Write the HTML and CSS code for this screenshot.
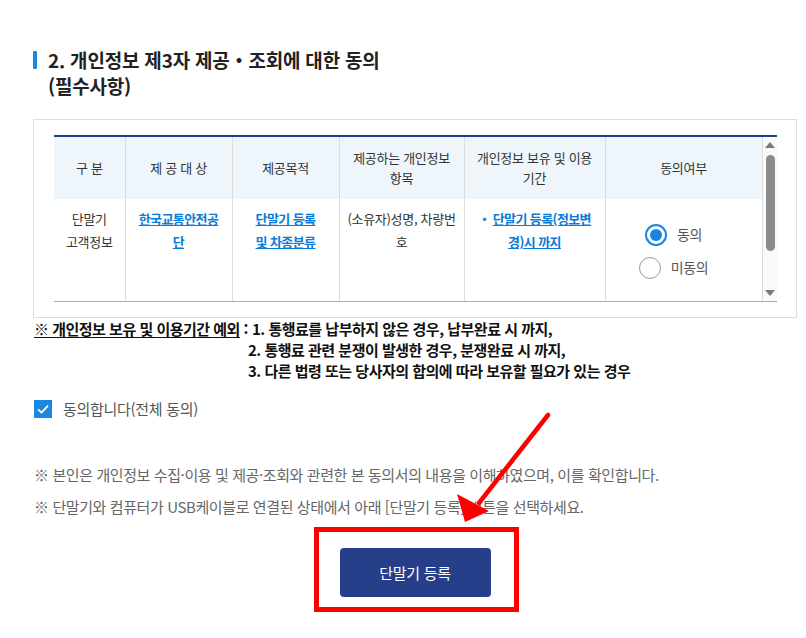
FILE: index.html
```html
<!DOCTYPE html>
<html lang="ko">
<head>
<meta charset="utf-8">
<title>개인정보 제3자 제공 동의</title>
<link rel="stylesheet" href="styles.css">
</head>
<body>
<div class="page">
  <div class="title">
    <span class="title-bar"></span>
    <h2 class="title-text">2. 개인정보 제3자 제공・조회에 대한 동의<br>(필수사항)</h2>
  </div>

  <div class="box">
    <div class="scroller">
      <table class="agree-table">
        <colgroup>
          <col class="c1"><col class="c2"><col class="c3"><col class="c4"><col class="c5"><col class="c6">
        </colgroup>
        <thead>
          <tr>
            <th>구 분</th>
            <th>제 공 대 상</th>
            <th>제공목적</th>
            <th>제공하는 개인정보<br>항목</th>
            <th>개인정보 보유 및 이용<br>기간</th>
            <th>동의여부</th>
          </tr>
        </thead>
        <tbody>
          <tr>
            <td>단말기<br>고객정보</td>
            <td><a class="lnk" href="#">한국교통안전공<br>단</a></td>
            <td><a class="lnk" href="#">단말기 등록<br>및 차종분류</a></td>
            <td>(소유자)성명, 차량번<br>호</td>
            <td><span class="dot">・</span><a class="lnk" href="#">단말기 등록(정보변<br>경)시 까지</a></td>
            <td class="radios">
              <label class="radio"><span class="rcircle on"></span><span>동의</span></label>
              <label class="radio"><span class="rcircle"></span><span>미동의</span></label>
            </td>
          </tr>
        </tbody>
      </table>
      <div class="sbar">
        <span class="sarrow up"></span>
        <span class="sthumb"></span>
        <span class="sarrow down"></span>
      </div>
    </div>
  </div>

  <div class="except">
    <div class="except-label"><u>※ 개인정보 보유 및 이용기간 예외</u> :</div>
    <div class="except-list">
      <div>1. 통행료를 납부하지 않은 경우, 납부완료 시 까지,</div>
      <div>2. 통행료 관련 분쟁이 발생한 경우, 분쟁완료 시 까지,</div>
      <div>3. 다른 법령 또는 당사자의 합의에 따라 보유할 필요가 있는 경우</div>
    </div>
  </div>

  <label class="check">
    <span class="cbox"><svg viewBox="0 0 18 18" width="18" height="18"><path d="M4 9.3 L7.6 12.6 L14 5.6" fill="none" stroke="#fff" stroke-width="1.8"/></svg></span>
    <span>동의합니다(전체 동의)</span>
  </label>

  <p class="note first">※ 본인은 개인정보 수집·이용 및 제공·조회와 관련한 본 동의서의 내용을 이해하였으며, 이를 확인합니다.</p>
  <p class="note">※ 단말기와 컴퓨터가 USB케이블로 연결된 상태에서 아래 [단말기 등록] 버튼을 선택하세요.</p>

  <div class="btn-row">
    <button class="btn" type="button">단말기 등록</button>
  </div>

  <div class="highlight"></div>
  <svg class="arrow" width="806" height="638" viewBox="0 0 806 638">
    <line x1="548" y1="415" x2="479" y2="503" stroke="#f00" stroke-width="4.5" stroke-linecap="round"/>
    <polygon points="465,522 457,494 489,511" fill="#f00"/>
  </svg>
</div>
</body>
</html>
```
FILE: styles.css
```css
* { box-sizing: border-box; }
html, body { margin: 0; padding: 0; background: #fff; }
body {
  font-family: "Noto Sans CJK KR", "Noto Sans", sans-serif;
  color: #333;
  width: 806px;
  height: 638px;
  overflow: hidden;
}
.page {
  position: relative;
  padding: 47px 9px 0 33px;
  height: 638px;
}

.title { display: flex; align-items: flex-start; }
.title-bar {
  width: 4px;
  height: 18px;
  margin-top: 4px;
  background: #1a88e0;
  border-radius: 1px;
  flex: none;
}
.title-text {
  margin: 0 0 0 11px;
  font-size: 19px;
  line-height: 26px;
  font-weight: 700;
  color: #222;
  letter-spacing: -0.2px;
}

.box {
  margin-top: 20px;
  width: 764px;
  height: 199px;
  border: 1px solid #ddd;
  padding: 15px 19px 0 20px;
}
.scroller {
  display: flex;
  border-top: 2px solid #23408e;
  border-bottom: 1px solid #aaa;
  height: 167px;
  overflow: hidden;
}
.agree-table {
  border-collapse: collapse;
  width: 708px;
  table-layout: fixed;
  font-size: 13px;
  color: #333;
  letter-spacing: -0.3px;
}
.c1 { width: 71px; } .c2 { width: 107px; } .c3 { width: 107px; }
.c4 { width: 125px; } .c5 { width: 141px; } .c6 { width: 157px; }
.agree-table th {
  height: 62px;
  background: #eef6fc;
  font-weight: 400;
  line-height: 20px;
  border-left: 1px solid #dcdcdc;
  text-align: center;
  vertical-align: middle;
  padding: 0 4px;
}
.agree-table td {
  height: 104px;
  line-height: 23px;
  border-left: 1px solid #dcdcdc;
  text-align: center;
  vertical-align: top;
  padding: 8px 4px 0;
}
.agree-table th:first-child, .agree-table td:first-child { border-left: 0; }
.agree-table th:last-child, .agree-table td:last-child { border-right: 1px solid #dcdcdc; }
.lnk {
  color: #0b7bd8;
  font-weight: 700;
  text-decoration: underline;
  letter-spacing: -0.6px;
}
.dot { color: #0b7bd8; font-weight: 700; margin-right: 2px; }
.agree-table td.radios { padding: 19px 20px 0 0; }
.radio {
  display: flex;
  align-items: center;
  justify-content: center;
  gap: 10px;
  height: 33px;
  font-size: 14px;
  color: #555;
}
.rcircle {
  width: 22px;
  height: 22px;
  border-radius: 50%;
  border: 1px solid #9a9a9a;
  background: #fff;
  position: relative;
  flex: none;
}
.rcircle.on { border: 2px solid #1a85e0; }
.rcircle.on::after {
  content: "";
  position: absolute;
  left: 3px; top: 3px;
  width: 12px; height: 12px;
  border-radius: 50%;
  background: #1a85e0;
}

.sbar {
  width: 15px;
  flex: none;
  background: #fafafa;
  display: flex;
  flex-direction: column;
  align-items: center;
}
.sarrow { width: 0; height: 0; border-left: 5px solid transparent; border-right: 5px solid transparent; }
.sarrow.up { border-bottom: 6px solid #7a7a7a; margin-top: 5px; }
.sarrow.down { border-top: 6px solid #7a7a7a; margin-top: auto; margin-bottom: 5px; }
.sthumb {
  width: 9px;
  height: 96px;
  background: #8b8b8b;
  border-radius: 5px;
  margin-top: 7px;
}

.except {
  display: flex;
  margin-top: 0px;
  padding-left: 1px;
  font-size: 15px;
  font-weight: 700;
  line-height: 21px;
  color: #111;
  letter-spacing: -0.5px;
}
.except-label { white-space: pre; margin-right: 4px; }
.except-label u { text-underline-offset: 2px; }
.except-list > div:nth-child(n+2) { margin-left: -4px; }

.check {
  display: flex;
  align-items: center;
  gap: 11px;
  margin-top: 17px;
  padding-left: 1px;
  font-size: 15px;
  color: #555;
  letter-spacing: -0.3px;
}
.cbox {
  width: 18px;
  height: 18px;
  background: #1a87e0;
  display: flex;
}

.note {
  margin: 0;
  padding-left: 1px;
  font-size: 15px;
  line-height: 20px;
  color: #666;
  letter-spacing: -0.4px;
}
.note.first { margin-top: 46px; }
.note + .note { margin-top: 12px; }

.btn-row { display: flex; justify-content: center; margin-top: 31px; width: 764px; }
.btn {
  width: 151px;
  height: 49px;
  border: 0;
  border-radius: 4px;
  background: #253f8a;
  color: #fff;
  font-family: inherit;
  font-size: 15px;
  letter-spacing: -0.3px;
}

.highlight {
  position: absolute;
  left: 314px;
  top: 527px;
  width: 205px;
  height: 85px;
  border: 5px solid #f00;
}
.arrow { position: absolute; left: 0; top: 0; pointer-events: none; }
```
